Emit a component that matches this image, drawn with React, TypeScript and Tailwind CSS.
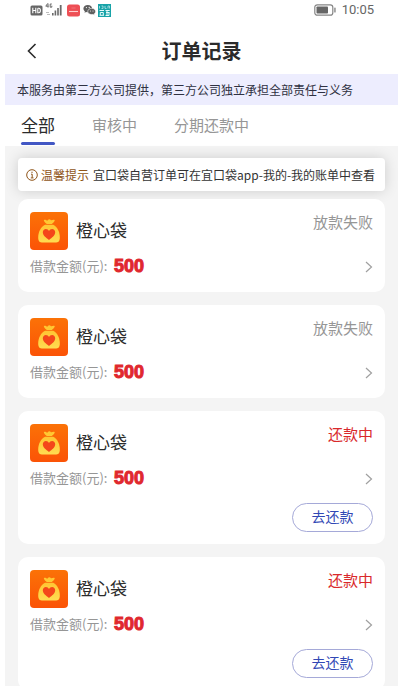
import React from "react";

type Order = {
  id: number;
  name: string;
  amount: number;
  status: string;
  repayable: boolean;
};

const orders: Order[] = [
  { id: 1, name: "橙心袋", amount: 500, status: "放款失败", repayable: false },
  { id: 2, name: "橙心袋", amount: 500, status: "放款失败", repayable: false },
  { id: 3, name: "橙心袋", amount: 500, status: "还款中", repayable: true },
  { id: 4, name: "橙心袋", amount: 500, status: "还款中", repayable: true },
];

const tabs = ["全部", "审核中", "分期还款中"];

function SignalIcon() {
  return (
    <svg width="18" height="14" viewBox="0 0 18 14" fill="#6a6a6a" aria-hidden="true">
      <path d="M2.6 0.5 L0.8 3.2 H3.6 M3 0.5 V4.6" fill="none" stroke="#6a6a6a" strokeWidth="1" />
      <path d="M6.8 1 H5.2 V4.2 H6.8 V2.7" fill="none" stroke="#6a6a6a" strokeWidth="1" />
      <path d="M1 9.5 H4 M2 11.5 H5" stroke="#bdbdbd" strokeWidth="1" />
      <rect x="7" y="10" width="1.6" height="2.5" />
      <rect x="9.6" y="7.5" width="1.6" height="5" />
      <rect x="12.2" y="5" width="1.6" height="7.5" />
      <rect x="14.8" y="2" width="1.8" height="10.5" />
    </svg>
  );
}

function ChatIcon() {
  return (
    <svg width="13" height="12" viewBox="0 0 13 12" aria-hidden="true">
      <path d="M4.8 1 C2.2 1 0.4 2.6 0.4 4.6 C0.4 5.8 1 6.7 1.9 7.3 L1.5 8.8 L3.2 7.9 C3.7 8.1 4.3 8.2 4.8 8.2 C7.4 8.2 9.2 6.6 9.2 4.6 C9.2 2.6 7.4 1 4.8 1Z" fill="#5f5f5f" />
      <path d="M8.7 4.3 C6.4 4.3 4.8 5.7 4.8 7.5 C4.8 9.3 6.4 10.6 8.7 10.6 C9.2 10.6 9.6 10.5 10 10.4 L11.5 11.2 L11.1 9.9 C12 9.3 12.6 8.5 12.6 7.5 C12.6 5.7 11 4.3 8.7 4.3Z" fill="#5f5f5f" stroke="#fff" strokeWidth="0.6" />
      <g fill="#fff">
        <circle cx="3.4" cy="3.6" r="0.6" />
        <circle cx="6.2" cy="3.4" r="0.6" />
        <circle cx="7.4" cy="6.9" r="0.5" />
        <circle cx="10" cy="6.9" r="0.5" />
      </g>
    </svg>
  );
}

function BatteryIcon() {
  return (
    <svg width="22" height="12" viewBox="0 0 22 12" aria-hidden="true">
      <rect x="0.8" y="0.8" width="18" height="10.4" rx="2.5" fill="#fff" stroke="#858585" strokeWidth="1.2" />
      <rect x="2.5" y="2.5" width="11.5" height="7" rx="0.8" fill="#666" />
      <rect x="20.3" y="3.5" width="1.3" height="5" rx="0.6" fill="#7d7d7d" />
    </svg>
  );
}

function StatusBar() {
  return (
    <div className="flex h-5 items-center justify-between pl-[25px] pr-6">
      <div className="flex items-center">
        <svg width="13" height="11" viewBox="0 0 13 11" aria-hidden="true">
          <rect x="0.5" y="0.5" width="12" height="10" rx="1.5" fill="#666" />
          <path d="M2.8 2.8 V8.2 M5.8 2.8 V8.2 M2.8 5.5 H5.8 M7.8 3.3 V7.7 H8.8 C10.9 7.7 10.9 3.3 8.8 3.3 H7.8" fill="none" stroke="#fff" strokeWidth="1.1" />
        </svg>
        <span className="ml-0.5 flex">
          <SignalIcon />
        </span>
        <svg className="ml-1" width="13" height="13" viewBox="0 0 13 13" aria-hidden="true">
          <rect x="0" y="0.5" width="13" height="12" rx="2.5" fill="#ee4f55" />
          <path d="M2 7.5 H11" stroke="#ffd0d0" strokeWidth="1.1" />
          <path d="M4.5 4 H8.5" stroke="#f27478" strokeWidth="1" />
        </svg>
        <span className="ml-[3px] flex">
          <ChatIcon />
        </span>
        <svg className="ml-0.5" width="13" height="13" viewBox="0 0 13 13" aria-hidden="true">
          <rect width="13" height="13" fill="#18a3a8" />
          <path d="M1.5 2 V4.5 M3.5 2 H5 V4.5 H3.5 M7 2 V4.5 H8.5 M10 4.5 V2 H11.5 V4.5" fill="none" stroke="#a5dfe1" strokeWidth="0.9" />
          <path d="M1.5 6.5 H6 M2.3 8.5 H5.3 M2.3 8.5 V11 M5.3 8.5 V11 M1.5 11.3 H6 M7.5 6.5 H11.7 M8 8.5 H11.5 M9 6.5 V11.5 M11 8.5 V11.5 H7.5" fill="none" stroke="#e6fafa" strokeWidth="1" />
        </svg>
      </div>
      <div className="flex items-center gap-1.5">
        <BatteryIcon />
        <span className="font-[Roboto,sans-serif] text-[13px] leading-5 text-[#666]">10:05</span>
      </div>
    </div>
  );
}

function BagIcon() {
  return (
    <svg className="shrink-0" width="38" height="38" viewBox="0 0 38 38" aria-hidden="true">
      <defs>
        <linearGradient id="tile" x1="0" y1="0" x2="0" y2="1">
          <stop offset="0" stopColor="#fb7207" />
          <stop offset="1" stopColor="#fb5306" />
        </linearGradient>
        <linearGradient id="bag" x1="0" y1="0" x2="0" y2="1">
          <stop offset="0" stopColor="#ffc532" />
          <stop offset="1" stopColor="#ffdc52" />
        </linearGradient>
      </defs>
      <rect width="38" height="38" rx="4" fill="url(#tile)" />
      <path d="M13.8 8.2 C15 6.8 16.6 8.6 17.6 8.4 C18.6 7 20 7 21 8.3 C22.2 8.5 23.6 6.8 24.8 8.2 C24.3 10.2 22.8 11 21.8 12 H16.8 C15.6 11 14.3 10.2 13.8 8.2Z" fill="#ffc832" />
      <path d="M15 12.8 H23.2 C27.8 15.2 29.8 20.5 29.8 25.5 C29.8 29.2 28.5 30.5 25 30.5 H13 C9.5 30.5 8.2 29.2 8.2 25.5 C8.2 20.5 10.4 15.2 15 12.8Z" fill="url(#bag)" />
      <path d="M19 28 C16 25.8 12.8 23.3 12.8 20.3 C12.8 18.3 14.2 17 15.9 17 C17.3 17 18.4 17.8 19 18.9 C19.6 17.8 20.7 17 22.1 17 C23.8 17 25.2 18.3 25.2 20.3 C25.2 23.3 22 25.8 19 28Z" fill="#f4471a" />
    </svg>
  );
}

function OrderCard({ order }: { order: Order }) {
  return (
    <li className="rounded-[10px] bg-white px-3 pb-3 pt-[13px]">
      <div className="flex items-start justify-between">
        <div className="flex gap-2">
          <BagIcon />
          <h2 className="text-[17px] leading-9 text-[#2b2b2b]">{order.name}</h2>
        </div>
        <span className={`text-[15px] leading-5 ${order.repayable ? "text-[#d9292b]" : "text-[#969696]"}`}>
          {order.status}
        </span>
      </div>
      <div className="mt-1 flex h-[26px] items-center justify-between">
        <p className="flex h-[26px] items-start">
          <span className="w-[84px] whitespace-nowrap text-[13px] leading-6 text-[#969696]">借款金额(元):</span>
          <strong className="font-['Liberation_Sans',Arial,sans-serif] text-lg leading-6 text-[#e0282e] [-webkit-text-stroke:1px_#e0282e]">
            {order.amount}
          </strong>
        </p>
        <button type="button" aria-label="查看订单" className="flex">
          <svg width="8" height="12" viewBox="0 0 8 12" fill="none" stroke="#a0a0a0" strokeWidth="1.2" aria-hidden="true">
            <path d="M1 1 L6.5 6 L1 11" />
          </svg>
        </button>
      </div>
      {order.repayable && (
        <div className="mt-[11px] flex justify-end">
          <button
            type="button"
            className="flex h-[29px] w-[81px] justify-center rounded-full border border-[#a5a9d8] text-sm leading-6 text-[#3148b5]"
          >
            去还款
          </button>
        </div>
      )}
    </li>
  );
}

export default function App() {
  return (
    <div className="h-screen overflow-hidden bg-white pl-[5px] pr-1 font-['Noto_Sans_CJK_SC',sans-serif]">
      <StatusBar />
      <header className="grid h-[54px] grid-cols-[1fr_auto_1fr] items-center pt-2">
        <button type="button" aria-label="返回" className="ml-[22px] flex justify-self-start">
          <svg width="10" height="16" viewBox="0 0 10 16" fill="none" stroke="#2b2b2b" strokeWidth="1.6" aria-hidden="true">
            <path d="M8.5 1 L1.5 8 L8.5 15" />
          </svg>
        </button>
        <h1 className="text-xl font-bold leading-7 text-[#2b2b2b]">订单记录</h1>
      </header>
      <p className="h-[31px] whitespace-nowrap bg-[#ededfe] px-3 text-xs leading-[31px] text-[#2f3142]">
        本服务由第三方公司提供，第三方公司独立承担全部责任与义务
      </p>
      <nav className="flex h-[41px] gap-[37px] pl-4">
        {tabs.map((tab, i) => (
          <button
            key={tab}
            type="button"
            className={
              i === 0
                ? "flex flex-col text-[17px] leading-10 text-[#2b2b2b]"
                : "flex text-[15px] leading-10 text-[#969696]"
            }
          >
            <span className="block h-[37px]">{tab}</span>
            {i === 0 && <span className="block h-[3px] w-full rounded-full bg-[#4257c4]" />}
          </button>
        ))}
      </nav>
      <main className="min-h-screen bg-[#f4f4f4] px-[13px] pt-3">
        <div className="flex h-[33px] items-center whitespace-nowrap rounded-[4px] bg-white pl-2 text-xs leading-5 shadow-[0_0_14px_rgba(0,0,0,0.16)]">
          <svg className="mr-[3px]" width="12" height="12" viewBox="0 0 12 12" fill="none" stroke="#8f5418" aria-hidden="true">
            <circle cx="6" cy="6" r="5.3" strokeWidth="1" />
            <path d="M5 5.2 H6.2 V8.8 M4.8 8.9 H7.5 M6 2.7 V4" strokeWidth="1" />
          </svg>
          <span className="mr-1 text-[#8f5418]">温馨提示</span>
          <span className="text-[#333]">宜口袋自营订单可在宜口袋app-我的-我的账单中查看</span>
        </div>
        <ul className="mt-2 flex flex-col gap-[13px]">
          {orders.map((order) => (
            <OrderCard key={order.id} order={order} />
          ))}
        </ul>
      </main>
    </div>
  );
}
